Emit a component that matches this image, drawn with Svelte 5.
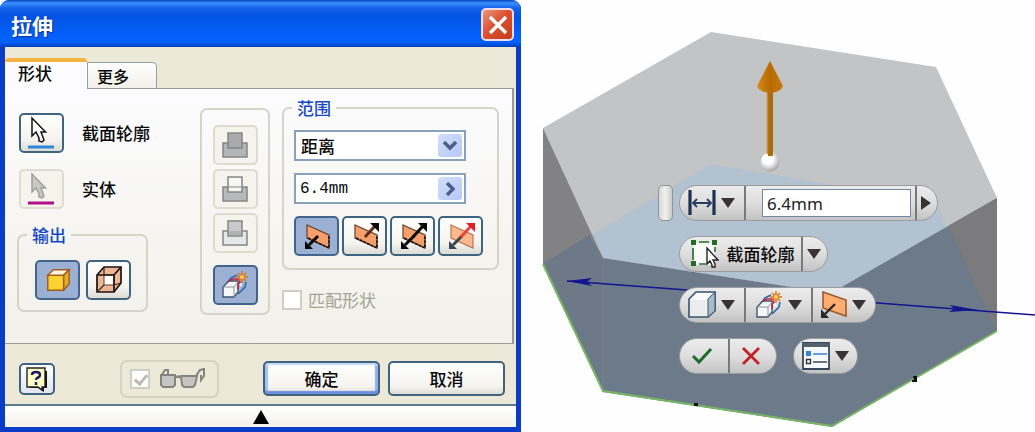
<script>
  let distance = $state('6.4mm');
  let extent = $state('距离');
  let output = $state('solid');
  let operation = $state('new');
  let direction = $state('a');
  const operations = [
    { id: 'join', label: '求并', top: '#a9aaab', base: '#b4b5b6' },
    { id: 'cut', label: '求差', top: '#f6f6f3', base: '#b8b9ba' },
    { id: 'intersect', label: '求交', top: '#c9cacb', base: '#e6e7e7' }
  ];
  const directions = [
    { id: 'a', label: '方向 1', down: true, up: false },
    { id: 'b', label: '方向 2', down: false, up: true },
    { id: 'both', label: '对称', down: true, up: true },
    { id: 'asym', label: '不对称', down: true, up: true }
  ];
</script>

{#snippet caret()}
  <svg width="14" height="10" viewBox="0 0 14 10" aria-hidden="true"><path d="M0 0H14L7 10Z" fill="#383434" /></svg>
{/snippet}

{#snippet newSolid(size)}
  <svg width={size} height={size} viewBox="0 0 28 28" aria-hidden="true">
    <path d="M6 12 10 7 16 4M25 11 24 16 17 23" fill="none" stroke="#2f6aae" stroke-width="1.6" />
    <path d="M2 16 8 10H17V21L13 26H2Z" fill="#f4f6f8" stroke="#42556b" stroke-width="1.4" />
    <path d="M2 16H13V26M13 16 17 11" fill="none" stroke="#8b9299" />
    <path d="M8 10 12 8H17L19 11 17 14V18" fill="none" stroke="#c22740" stroke-width="1.6" />
    <path d="M18 13 21 12 20 16Z" fill="#fff" />
    <path d="M21 0V12M15 6H27M17 2 25 10M25 2 17 10" stroke="#d9761b" stroke-width="1.5" />
    <circle cx="21" cy="6" r="2.5" fill="#ffd06b" stroke="#df7617" />
  </svg>
{/snippet}

{#snippet dirIcon(d)}
  <svg width="28" height="28" viewBox="0 0 28 28" aria-hidden="true">
    <path d="M4 3 26 13V26L4 16Z" fill={d.id === 'asym' ? '#ffb78b' : '#f5a06c'} stroke={d.id === 'asym' ? '#b57855' : '#65412d'} stroke-width="1.2" />
    {#if d.id !== 'asym'}<path d="M5 16 26 26V14" fill="none" stroke="#15100e" stroke-width="1.6" stroke-dasharray="3 1" />{/if}
    {#if d.down}
      <path d="M15 14 6 23" stroke={d.id === 'asym' ? '#374650' : '#080808'} stroke-width="3" />
      <path d="M2 27V19L10 27Z" fill={d.id === 'asym' ? '#374650' : '#080808'} />
    {/if}
    {#if d.up}
      <path d="M14 15 24 4" stroke={d.id === 'asym' ? '#e9443f' : d.id === 'b' ? '#5f2e17' : '#080808'} stroke-width="3" />
      <path d="M19 1H28V10Z" fill={d.id === 'asym' ? '#e51d25' : '#080808'} />
    {/if}
  </svg>
{/snippet}

{#snippet pickIcon(fill, edge, line)}
  <svg width="30" height="34" viewBox="0 0 30 34" aria-hidden="true">
    <path d="M6 2V20L10 16L13 22V25L16 26L18 24L15 16H19.500Z" fill={fill} stroke={edge} stroke-width="1.5" />
    <path d="M2 31H28" stroke={line} stroke-width="3" />
  </svg>
{/snippet}

<main>
  <section class="dialog" aria-label="拉伸">
    <header>
      <h1>拉伸</h1>
      <button class="close" aria-label="关闭">
        <svg width="20" height="20" viewBox="0 0 20 20"><path d="M2 2 18 18M18 2 2 18" stroke="#fff" stroke-width="3.4" /></svg>
      </button>
    </header>

    <div class="client">
      <div class="tabs" role="tablist">
        <button class="tab active" role="tab" aria-selected="true">形状</button>
        <button class="tab" role="tab" aria-selected="false">更多</button>
      </div>

      <div class="panel" role="tabpanel">
        <div class="left">
          <div class="pick">
            <button class="tool pointer" id="profile">{@render pickIcon('#fff', '#111', '#2f86dc')}</button>
            <label for="profile">截面轮廓</label>
          </div>
          <div class="pick">
            <button class="tool pointer off" id="solid" disabled>{@render pickIcon('#c9c9c3', '#a1a19b', '#b1108b')}</button>
            <label for="solid">实体</label>
          </div>
          <fieldset class="output">
            <legend>输出</legend>
            <div class="row wide">
              <button class="tool" class:on={output === 'solid'} aria-label="实体" onclick={() => (output = 'solid')}>
                <svg width="28" height="26" viewBox="0 0 28 28" aria-hidden="true">
                  <path d="M3 9 9 3H26L20 9Z" fill="#fff3dd" stroke="#a45a1c" stroke-width="1.5" />
                  <path d="M20 9 26 3V18L20 25Z" fill="#e6ac25" stroke="#a45a1c" stroke-width="1.5" />
                  <path d="M3 9H20V25H3Z" fill="#fbd331" stroke="#a45a1c" stroke-width="1.5" />
                </svg>
              </button>
              <button class="tool" class:on={output === 'surface'} aria-label="曲面" onclick={() => (output = 'surface')}>
                <svg width="28" height="28" viewBox="0 0 28 28" aria-hidden="true">
                  <path d="M2 9 9 1H26V17L19 26H2Z" fill="#edb795" stroke="#1b1210" stroke-width="1.7" />
                  <path d="M9 9H19V19H9Z" fill="#fff" stroke="#54392b" />
                  <path d="M2 9H19V26M19 9 26 1" fill="none" stroke="#1b1210" stroke-width="1.7" />
                  <path d="M9 1V9M2 26 9 19M26 17 19 19" stroke="#3c2419" stroke-width="1.2" />
                </svg>
              </button>
            </div>
          </fieldset>
        </div>

        <div class="ops" role="group" aria-label="操作">
          {#each operations as op}
            <button class="tool off" disabled aria-label={op.label}>
              <svg width="28" height="28" viewBox="0 0 28 28" aria-hidden="true">
                <path d="M2 12H26V26H2Z" fill={op.base} stroke="#858687" stroke-width="1.5" />
                <path d="M7 2H21V17H7Z" fill={op.top} stroke="#858687" stroke-width="1.5" />
                {#if op.id === 'cut'}<path d="M7 12H21" stroke="#858687" />{/if}
                {#if op.id === 'intersect'}<path d="M8 12H20V16H8Z" fill="#b2b3b4" />{/if}
              </svg>
            </button>
          {/each}
          <button class="tool new" class:on={operation === 'new'} aria-label="新建实体" onclick={() => (operation = 'new')}>
            {@render newSolid(28)}
          </button>
        </div>

        <div class="right">
          <fieldset class="range">
            <legend>范围</legend>
            <div class="box">
              <select bind:value={extent} aria-label="范围"><option>距离</option></select>
              <span class="drop"><svg width="14" height="10" viewBox="0 0 14 10"><path d="M1 1 7 7 13 1" fill="none" stroke="#495f8b" stroke-width="3.4" /></svg></span>
            </div>
            <div class="box">
              <input type="text" bind:value={distance} aria-label="距离" />
              <button class="drop" aria-label="更多选项"><svg width="10" height="14" viewBox="0 0 10 14"><path d="M2 1 8 7 2 13" fill="none" stroke="#495f8b" stroke-width="3.4" /></svg></button>
            </div>
            <div class="row">
              {#each directions as d}
                <button class="tool" class:on={direction === d.id} aria-label={d.label} onclick={() => (direction = d.id)}>{@render dirIcon(d)}</button>
              {/each}
            </div>
          </fieldset>
          <label class="match"><input type="checkbox" disabled />匹配形状</label>
        </div>
      </div>

      <footer>
        <button class="help" aria-label="帮助">
          <svg width="24" height="26" viewBox="0 0 24 26" aria-hidden="true">
            <path d="M5 5H22V22H19V26L13 22H5Z" fill="#111" />
            <path d="M2 2H20V21H17V24L13 21H2Z" fill="#ffffc4" stroke="#222" stroke-width="1.4" />
            <path d="M7 9Q7 6 11 6Q15 6 15 9Q15 11 12 12Q11 13 11 14M11 16V19" fill="none" stroke="#18186f" stroke-width="2.4" />
          </svg>
        </button>
        <label class="preview">
          <input type="checkbox" checked disabled aria-label="预览" />
          <svg width="46" height="22" viewBox="0 0 46 22" aria-hidden="true">
            <path d="M2 8 6 2 9 2V7M37 8 41 2 45 1V8L42 12V7" fill="none" stroke="#85857f" stroke-width="2" />
            <path d="M2 7H16V17L14 19H4L2 17ZM22 8H38L36 17 34 19H25L23 17Z" fill="#c5c5c4" stroke="#85857f" stroke-width="2" />
            <path d="M16 10Q19 7 22 10" fill="none" stroke="#85857f" stroke-width="2.4" />
          </svg>
        </label>
        <button class="push default">确定</button>
        <button class="push">取消</button>
      </footer>

      <button class="fold" aria-label="折叠"><svg width="16" height="14" viewBox="0 0 16 14"><path d="M8 0 16 14H0Z" fill="#000" /></svg></button>
    </div>
  </section>

  <section class="scene" aria-label="模型">
    <svg class="model" viewBox="521 0 514 432" preserveAspectRatio="xMinYMin slice" aria-hidden="true">
      <defs>
        <radialGradient id="ball" cx=".4" cy=".35" r=".65"><stop offset=".4" stop-color="#fff" /><stop offset="1" stop-color="#a9a9ae" /></radialGradient>
        <linearGradient id="cone"><stop offset="0" stop-color="#d98a1c" /><stop offset=".5" stop-color="#b86a00" /><stop offset="1" stop-color="#c57a10" /></linearGradient>
        <clipPath id="topface"><path d="M543 128 711 32 936 67 997 198 831 293 603 258Z" /></clipPath>
      </defs>
      <path d="M543 128 711 32 936 67 997 198 831 293 603 258Z" fill="#c2c4c5" />
      <path d="M543 264 711 164 936 203 997 331 832 427 603 392Z" fill="#b3c2d1" clip-path="url(#topface)" />
      <path d="M543 128 603 258V392L543 264Z" fill="#828284" />
      <path d="M543 264 589 235 603 258V392Z" fill="#6d7987" />
      <path d="M603 258 831 293 997 198V331L832 427 603 392Z" fill="#6d7a89" />
      <path d="M948 226 997 198V331Z" fill="#7b7a7d" />
      <path d="M603 258V392" stroke="#768391" />
      <path d="M543 264 603 391 832 426 997 331" fill="none" stroke="#75b563" stroke-width="2" />
      <path d="M567 281 687 290 878 303 1035 315" fill="none" stroke="#14148f" stroke-width="1.6" />
      <path d="M567 281 592 278 587 282 592 286ZM978 310 950 305 954 309 949 312Z" fill="#14148f" />
      <path d="M913 376H917V382H912V380H914ZM694 403H698V406H694Z" fill="#111" />
      <circle cx="770" cy="162" r="9.5" fill="url(#ball)" />
      <path d="M768 90H773V156H768Z" fill="#ab6a0d" />
      <path d="M767.500 90V154" stroke="#cf8b28" stroke-width="1.5" />
      <path d="M770 61 783 86Q781 92 770 93Q759 92 757 86Z" fill="url(#cone)" />
    </svg>

    <div class="mini">
      <div class="line">
        <span class="grip"></span>
        <div class="pill">
          <button class="seg first" aria-label="距离">
            <svg width="28" height="26" viewBox="0 0 28 26" aria-hidden="true">
              <path d="M2 0V25M26 0V25" stroke="#1e3155" stroke-width="3.2" />
              <path d="M5 13H23M9 9 5 13 9 17M19 9 23 13 19 17" fill="none" stroke="#273d62" stroke-width="1.8" />
            </svg>{@render caret()}
          </button>
          <div class="seg value"><input type="text" bind:value={distance} aria-label="距离值" /></div>
          <button class="seg end" aria-label="选项"><svg width="10" height="14" viewBox="0 0 10 14"><path d="M0 0 10 7 0 14Z" fill="#383434" /></svg></button>
        </div>
      </div>
      <div class="line">
        <div class="pill">
          <button class="seg profile">
            <svg width="28" height="28" viewBox="0 0 28 28" aria-hidden="true">
              <path d="M3 3H24V25H3Z" fill="#f7faf6" />
              <path d="M8 2H18M2 8V20M8 24H15M24 7V12" fill="none" stroke="#29682b" stroke-width="1.6" />
              <path d="M0 0H5V5H0ZM21 0H26V5H21ZM0 21H5V26H0Z" fill="#256c28" />
              <path d="M16 8V24L19 21 21 25V27H24V24L22 20H27Z" fill="#fff" stroke="#222" stroke-width="1.4" />
            </svg>截面轮廓
          </button>
          <button class="seg drop-end" aria-label="选择">{@render caret()}</button>
        </div>
      </div>
      <div class="line">
        <div class="pill">
          <button class="seg first" aria-label="实体输出">
            <svg width="28" height="28" viewBox="0 0 28 28" aria-hidden="true">
              <path d="M1 8 8 1H27V20L20 26H1Z" fill="#fafbfc" stroke="#35516e" stroke-width="1.6" />
              <path d="M20 8 27 1V20L20 26Z" fill="#a9bac9" stroke="#35516e" />
              <path d="M2 9H19V25H2Z" fill="#ececee" />
            </svg>{@render caret()}
          </button>
          <button class="seg" aria-label="新建实体操作">{@render newSolid(28)}{@render caret()}</button>
          <button class="seg last" aria-label="方向">
            <svg width="28" height="28" viewBox="0 0 28 28" aria-hidden="true">
              <path d="M4 1 27 9V25L4 17Z" fill="#ffae70" stroke="#9e592d" stroke-width="1.6" />
              <path d="M16 13 6 23" stroke="#292929" stroke-width="2.4" />
              <path d="M2 27V18L10 27Z" fill="#292929" />
            </svg>{@render caret()}
          </button>
        </div>
      </div>
      <div class="line actions">
        <div class="pill">
          <button class="seg act" aria-label="确定"><svg width="22" height="18" viewBox="0 0 22 18"><path d="M2 9 8 15 20 2" fill="none" stroke="#1f6b2b" stroke-width="3" /></svg></button>
          <button class="seg act" aria-label="取消"><svg width="18" height="18" viewBox="0 0 18 18"><path d="M1 1 17 17M17 1 1 17" stroke="#bf2229" stroke-width="2.8" /></svg></button>
        </div>
        <div class="pill">
          <button class="seg options" aria-label="显示选项">
            <svg width="28" height="28" viewBox="0 0 28 28" aria-hidden="true">
              <path d="M1 1H27V27H1Z" fill="#f5f8fc" stroke="#34485b" stroke-width="1.8" />
              <path d="M1 1H27V5H1Z" fill="#54616f" />
              <path d="M4 9H9V14H4Z" fill="#3384d2" /><path d="M11 12H25" stroke="#3384d2" stroke-width="1.6" />
              <path d="M4.500 17.500H8.500V21.500H4.500Z" fill="#fff" stroke="#333" stroke-width="1.4" /><path d="M11 20H25" stroke="#444" stroke-width="1.5" />
            </svg>{@render caret()}
          </button>
        </div>
      </div>
    </div>
  </section>
</main>

<style>
  :global(body) { margin: 0; background: #fff; }
  * { box-sizing: border-box; }
  main { display: flex; align-items: stretch; min-height: 100vh; font-family: "Noto Sans CJK SC", sans-serif; font-size: 17px; line-height: 20px; font-weight: 500; color: #080808; }
  button, input, select { font: inherit; color: inherit; margin: 0; padding: 0; }
  svg { display: block; flex: none; }
  button { display: flex; align-items: center; justify-content: center; }

  .dialog { flex: 0 0 auto; width: 50.3%; min-width: 521px; display: flex; flex-direction: column; border-radius: 9px 9px 0 0; background: #0a3cc8; overflow: hidden; }
  header { display: flex; align-items: center; justify-content: space-between; height: 47px; padding: 2px 7px 0 11px; background: linear-gradient(#0843b8 0, #3b91ff 3px, #1463e8 8px, #0353e2 16px, #0460fa 34px, #0462fb 42px, #0340b8 47px); }
  h1 { margin: 0; font-size: 21px; line-height: 28px; font-weight: 700; color: #fff; text-shadow: 1px 1px 1px #08308e; }
  .close { width: 33px; height: 33px; border: 2px solid #f1dcea; border-radius: 5px; background: linear-gradient(135deg, #e9977d, #dc5132 45%, #c33d1c); }

  .client { flex: 1; display: flex; flex-direction: column; margin: 0 5px 5px; background: #ece9d8; }
  .tabs { display: flex; align-items: flex-end; height: 41px; padding-top: 10px; }
  .tab { width: 70px; height: 26px; padding-left: 9px; justify-content: flex-start; font-size: 16px; border: 1px solid #91a0a5; border-bottom: 0; border-radius: 0 5px 0 0; background: linear-gradient(#fff, #f1f0e8); }
  .tab.active { position: relative; width: 82px; height: 31px; margin-bottom: -1px; padding-left: 13px; padding-bottom: 6px; font-size: 17px; border: 0; border-top: 4px solid #f5b23e; border-radius: 4px 4px 0 0; background: #fcfcfe; }

  .panel { display: grid; grid-template-columns: 195px 70px 1fr; margin-right: 2px; min-height: 256px; border: 1px solid #9b9c96; border-left: 0; border-right-width: 2px; background: linear-gradient(#fcfcfe, #f4f3ee 70%, #f2f1eb); }
  .left { padding: 24px 0 0 14px; }
  .pick { display: flex; align-items: center; gap: 18px; margin-bottom: 16px; }
  .tool { width: 45px; height: 40px; border: 2px solid #40647f; border-radius: 5px; background: linear-gradient(#fff, #f4f3ee 70%, #dcdbd4); }
  .tool.on { border-color: #41658e; background: #9cb0d4; }
  .tool.off { border-color: #dddccf; background: #f4f3ec; }
  .tool.pointer { padding-right: 2px; }
  fieldset { margin: 0; min-width: 0; border: 2px solid #d5d4c9; border-radius: 7px; }
  legend { padding: 0 5px; font-size: 17px; line-height: 18px; color: #1448c4; }
  .output { width: 131px; margin: 17px 0 0 -2px; padding: 16px 0 10px 16px; }
  .output legend { margin-left: -8px; }
  .row { display: flex; gap: 3px; }
  .row.wide { gap: 6px; }

  .ops { display: flex; flex-direction: column; align-items: center; gap: 4px; align-self: start; margin-top: 19px; padding: 15px 0 8px; border: 2px solid #d5d4c9; border-radius: 7px; }
  .new { margin-top: 8px; }

  .right { padding: 10px 13px 0 12px; }
  .range { display: flex; flex-direction: column; gap: 12px; padding: 13px 10px 12px; }
  .range legend { margin-left: -2px; }
  .box { display: flex; width: 172px; height: 31px; padding: 2px; border: 2px solid #88a2bb; background: #fff; }
  .box select, .box input { flex: 1; min-width: 0; border: 0; outline: 0; background: none; padding-left: 3px; appearance: none; }
  .box input { font: 16px/20px "Liberation Mono", monospace; padding-left: 2px; }
  .box select { margin-right: -24px; z-index: 1; }
  .drop { flex: none; display: flex; align-items: center; justify-content: center; width: 24px; border: 0; border-radius: 3px; background: linear-gradient(135deg, #d3ddfb, #b5c8f5); }
  .match { display: flex; align-items: center; gap: 6px; margin-top: 20px; font-weight: 400; color: #a5a494; }
  input[type="checkbox"] { appearance: none; flex: none; width: 20px; height: 20px; border: 2px solid #cfcec2; background: #fff; }
  .preview input:checked { position: relative; }
  .preview input:checked::after { content: ""; position: absolute; left: 5px; top: 1px; width: 5px; height: 10px; border: solid #bdbcb1; border-width: 0 3px 3px 0; transform: rotate(40deg); }

  footer { display: flex; align-items: center; flex: 1; min-height: 61px; padding: 12px 11px 3px 14px; border-bottom: 2px solid #5b7c8c; }
  .help { width: 36px; height: 32px; border: 2px solid #40647f; border-radius: 5px; background: linear-gradient(#fff, #dfe6ee); }
  .preview { display: flex; align-items: center; gap: 9px; height: 38px; margin: 0 auto 0 65px; padding: 0 12px 0 8px; border: 2px solid #d5d3c3; border-radius: 7px; }
  .push { width: 117px; height: 35px; margin-left: 8px; border: 2px solid #40647f; border-radius: 5px; background: linear-gradient(#fff, #f5f4ef 75%, #dddcd5); }
  .push.default { box-shadow: inset 0 -3px 1px #6d8fdf, inset 0 2px 1px #c4dafb, inset 3px 0 1px #a5c0f2, inset -3px 0 1px #8fafeb; }
  .fold { height: 21px; border: 0; background: linear-gradient(#fff, #f1f0ea); }

  .scene { flex: 1; position: relative; min-width: 0; overflow: hidden; background: #fefefe; }
  .model { width: 100%; height: 100%; }
  .mini { position: absolute; left: 137px; top: 185px; display: flex; flex-direction: column; gap: 15px; }
  .line { display: flex; padding-left: 21px; }
  .line:first-child { padding-left: 0; gap: 6px; }
  .actions { gap: 16px; }
  .grip { width: 15px; height: 36px; border: 1px solid #8f9499; border-radius: 5px; background: linear-gradient(90deg, #d7d7d7, #f0f0ee, #c9c9c9); }
  .pill { display: flex; height: 36px; border: 1px solid #9a9c9e; border-radius: 18px; overflow: hidden; background: linear-gradient(#ececec, #dedede 50%, #c3c3c3); }
  .seg { gap: 5px; width: 67px; border: 0; border-left: 2px solid #77797c; background: none; }
  .seg:first-child { border-left: 0; }
  .seg.first { width: 64px; padding-right: 1px; }
  .seg.last { width: 64px; padding-right: 4px; }
  .seg.value { width: 171px; padding: 3px 4px 3px 16px; }
  .value input { width: 100%; height: 28px; padding-left: 4px; border: 1px solid #7188a3; background: #fff; font: 17px/20px "Noto Sans", sans-serif; color: #222; outline: 0; }
  .seg.end { width: 22px; padding-right: 3px; }
  .seg.profile { width: 121px; gap: 8px; padding-left: 4px; }
  .seg.drop-end { width: 26px; padding-right: 2px; }
  .seg.act { width: 48px; padding-right: 4px; }
  .seg.options { width: 63px; }
</style>
